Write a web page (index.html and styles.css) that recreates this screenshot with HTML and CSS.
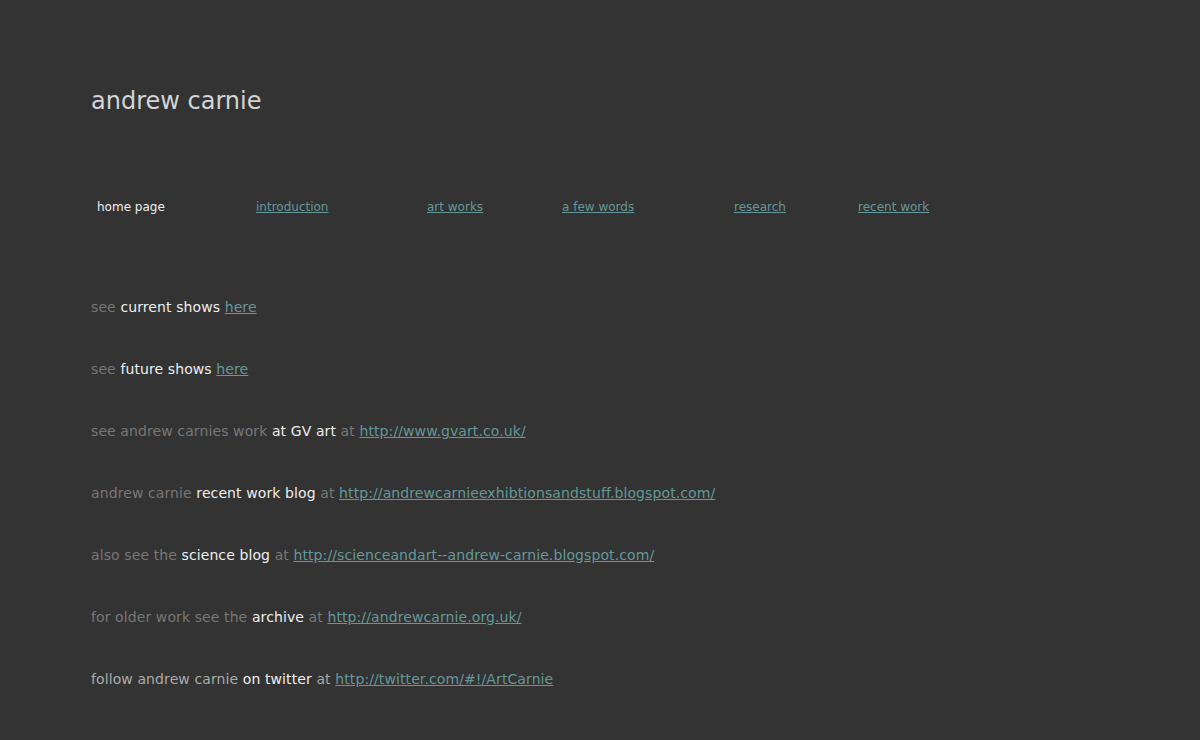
FILE: index.html
```html
<!DOCTYPE html>
<html lang="en">
<head>
  <meta charset="UTF-8">
  <title>andrew carnie</title>
  <link rel="stylesheet" href="styles.css">
</head>
<body>
  <div class="page">
    <h1>andrew carnie</h1>

    <nav class="menu">
      <span class="item current">home page</span>
      <a class="item w-intro" href="#">introduction</a>
      <a class="item w-art" href="#">art works</a>
      <a class="item w-words" href="#">a few words</a>
      <a class="item w-research" href="#">research</a>
      <a class="item" href="#">recent work</a>
    </nav>

    <div class="lines">
      <p><span class="dim">see</span> <span class="hi">current shows</span> <a href="#">here</a></p>
      <p><span class="dim">see</span> <span class="hi">future shows</span> <a href="#">here</a></p>
      <p><span class="dim">see andrew carnies work</span> <span class="hi">at GV art</span> <span class="dim">at</span> <a href="#">http://www.gvart.co.uk/</a></p>
      <p><span class="dim">andrew carnie</span> <span class="hi">recent work blog</span> <span class="dim">at</span> <a href="#">http://andrewcarnieexhibtionsandstuff.blogspot.com/</a></p>
      <p><span class="dim">also see the</span> <span class="hi">science blog</span> <span class="dim">at</span> <a href="#">http://scienceandart--andrew-carnie.blogspot.com/</a></p>
      <p><span class="dim">for older work see the</span> <span class="hi">archive</span> <span class="dim">at</span> <a href="#">http://andrewcarnie.org.uk/</a></p>
      <p><span class="mid">follow andrew carnie</span> <span class="hi">on twitter</span> <span class="mid">at</span> <a href="#">http://twitter.com/#!/ArtCarnie</a></p>
    </div>
  </div>
</body>
</html>
```

FILE: styles.css
```css
* {
  margin: 0;
  padding: 0;
  box-sizing: border-box;
}

body {
  background: #333333;
  font-family: 'DejaVu Sans', Verdana, sans-serif;
  color: #dddddd;
}

.page {
  padding: 86px 0 0 91px;
}

h1 {
  font-size: 24px;
  font-weight: normal;
  color: #d4d4d4;
  line-height: 30px;
}

a {
  color: #649898;
}

.menu {
  display: flex;
  margin-top: 83px;
  padding-left: 6px;
  font-size: 12px;
  line-height: 16px;
}

.menu .item {
  display: block;
}

.menu .current {
  color: #eeeeee;
  width: 159px;
}

.w-intro {
  width: 171px;
}

.w-art {
  width: 135px;
}

.w-words {
  width: 172px;
}

.w-research {
  width: 124px;
}

.lines {
  margin-top: 82px;
  font-size: 14px;
  line-height: 20px;
  letter-spacing: 0.1px;
}

.lines p {
  margin-bottom: 42px;
}

.dim {
  color: #777777;
}

.mid {
  color: #aaaaaa;
}

.hi {
  color: #eeeeee;
}
```
